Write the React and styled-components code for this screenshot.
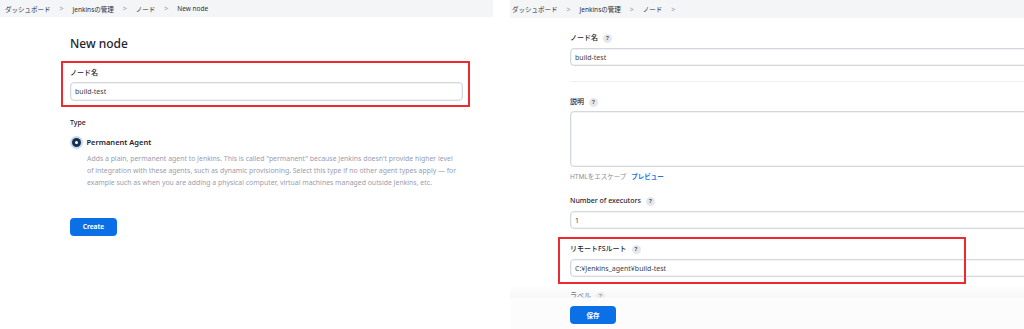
import React from 'react'
import styled, { createGlobalStyle } from 'styled-components'

const GlobalStyle = createGlobalStyle`
  html, body {
    margin: 0;
    padding: 0;
    background: #fff;
  }
  body {
    font-family: "Noto Sans", "Noto Sans CJK JP", sans-serif;
    color: #1f2330;
  }
`;

const Page = styled.div`
  display: flex;
  width: 1024px;
  height: 329px;
  overflow: hidden;
  gap: 17px;
`;

const Shot = styled.div`
  position: relative;
  display: flex;
  flex-direction: column;
  width: ${(p) => p.$width};
  flex-shrink: 0;
  height: 329px;
  overflow: hidden;
`;

const Breadcrumb = styled.div`
  display: flex;
  align-items: center;
  gap: 7px;
  height: ${(p) => p.$height}px;
  padding-left: ${(p) => p.$pad}px;
  background: #f4f5f7;
  font-size: 6.5px;
  color: #2b2f3a;
  flex-shrink: 0;
`;

const Crumb = styled.span`
  white-space: nowrap;
`;

const Chevron = styled.span`
  color: #9aa0aa;
  font-size: 7px;
  margin: 0 2px;
`;

const LeftMain = styled.div`
  display: flex;
  flex-direction: column;
  padding-left: 61px;
  width: 409px;
`;

const Heading = styled.h1`
  margin: 19px 0 0 9px;
  font-size: 12px;
  line-height: 16px;
  font-weight: 500;
  color: #1f2330;
`;

const Highlight = styled.div`
  margin-top: 9px;
  border: 2px solid #ec2a2f;
  padding: 5px 5px 4px 7px;
  display: flex;
  flex-direction: column;
  gap: 4px;
`;

const Label = styled.div`
  display: flex;
  align-items: center;
  gap: 5px;
  font-size: 7px;
  line-height: 10px;
  height: 10px;
  font-weight: 500;
  color: #1f2330;
  white-space: nowrap;
`;

const Help = styled.span`
  display: inline-flex;
  align-items: center;
  justify-content: center;
  width: 9px;
  height: 9px;
  border-radius: 50%;
  background: #e6e7eb;
  color: #4d525e;
  font-size: 6px;
  font-weight: 700;
`;

const Input = styled.div`
  box-sizing: border-box;
  height: ${(p) => p.$height || 18}px;
  width: ${(p) => p.$width || '100%'};
  border: 1px solid #d3d8df;
  box-shadow: inset 0 0 0 0.5px #e4e7ec;
  border-radius: 4px;
  padding: 0 4px;
  display: flex;
  align-items: ${(p) => (p.$area ? 'flex-start' : 'center')};
  font-size: 7px;
  color: #3a3f4b;
  background: #fff;
  white-space: nowrap;
`;

const Section = styled.div`
  display: flex;
  flex-direction: column;
  margin-left: 9px;
`;

const TypeTitle = styled.div`
  margin-top: 11px;
  font-size: 7px;
  line-height: 10px;
  font-weight: 500;
`;

const RadioRow = styled.div`
  margin-top: 8px;
  display: flex;
  align-items: center;
  height: 12px;
  gap: 6px;
  font-size: 7.5px;
  font-weight: 600;
  color: #1f2330;
`;

const Radio = styled.span`
  width: 9px;
  height: 9px;
  border-radius: 50%;
  background: #17304d;
  box-shadow: 0 0 0 2px #c7d9ef;
  display: flex;
  align-items: center;
  justify-content: center;
  margin-left: 1.5px;

  &::after {
    content: '';
    width: 3px;
    height: 3px;
    border-radius: 50%;
    background: #fff;
  }
`;

const Description = styled.p`
  margin: 5px 0 0 17px;
  font-size: 6.9px;
  line-height: 12px;
  color: #9a9db0;
  white-space: nowrap;
`;

const Button = styled.button`
  box-sizing: border-box;
  width: ${(p) => p.$width}px;
  height: 18px;
  border: none;
  border-radius: 4px;
  background: #0b6fe6;
  color: #fff;
  font-family: inherit;
  font-size: 6.5px;
  font-weight: 700;
  padding: 0;
`;

const CreateWrap = styled.div`
  margin-top: 23px;
`;

const RightMain = styled.div`
  display: flex;
  flex-direction: column;
  padding-left: 60px;
  width: 520px;
`;

const Field = styled.div`
  position: relative;
  display: flex;
  flex-direction: column;
  gap: ${(p) => p.$gap ?? 5}px;
  margin-top: ${(p) => p.$top}px;
`;

const Divider = styled.div`
  margin-top: 15px;
  height: 1px;
  background: #eef0f3;
`;

const Hint = styled.div`
  margin-top: 5px;
  font-size: 6.5px;
  line-height: 10px;
  color: #8a8e99;
  display: flex;
  gap: 5px;

  a {
    color: #1a73e8;
    font-weight: 700;
    text-decoration: none;
  }
`;

const Annotation = styled.div`
  position: absolute;
  left: -12px;
  top: -7px;
  width: 408px;
  height: 47px;
  box-sizing: border-box;
  border: 2px solid #ec2a2f;
  pointer-events: none;
`;

const Footer = styled.div`
  position: absolute;
  left: 0;
  right: 0;
  bottom: 0;
  height: 44px;
  background: linear-gradient(
    to bottom,
    rgba(255, 255, 255, 0) 0px,
    rgba(240, 240, 240, 0.55) 12px,
    #fcfcfc 13px
  );
  display: flex;
  align-items: flex-end;
  padding: 0 0 5px 60px;
  box-sizing: border-box;
`;

const crumbs = ['ダッシュボード', 'Jenkinsの管理', 'ノード'];

const App = () => {
  return (
    <>
      <GlobalStyle />
      <Page>
        <Shot $width="493px">
          <Breadcrumb $height={17} $pad={5}>
            {crumbs.map((c) => (
              <React.Fragment key={c}>
                <Crumb>{c}</Crumb>
                <Chevron>&gt;</Chevron>
              </React.Fragment>
            ))}
            <Crumb>New node</Crumb>
          </Breadcrumb>
          <LeftMain>
            <Heading>New node</Heading>
            <Highlight>
              <Label>ノード名</Label>
              <Input $height={19}>build-test</Input>
            </Highlight>
            <Section>
              <TypeTitle>Type</TypeTitle>
              <RadioRow>
                <Radio />
                Permanent Agent
              </RadioRow>
              <Description>
                Adds a plain, permanent agent to Jenkins. This is called "permanent" because Jenkins doesn't provide higher level<br />
                of integration with these agents, such as dynamic provisioning. Select this type if no other agent types apply — for<br />
                example such as when you are adding a physical computer, virtual machines managed outside Jenkins, etc.
              </Description>
              <CreateWrap>
                <Button $width={47}>Create</Button>
              </CreateWrap>
            </Section>
          </LeftMain>
        </Shot>

        <Shot $width="514px">
          <Breadcrumb $height={18} $pad={2}>
            {crumbs.map((c) => (
              <React.Fragment key={c}>
                <Crumb>{c}</Crumb>
                <Chevron>&gt;</Chevron>
              </React.Fragment>
            ))}
          </Breadcrumb>
          <RightMain>
            <Field $top={15}>
              <Label>ノード名<Help>?</Help></Label>
              <Input>build-test</Input>
            </Field>
            <Divider />
            <Field $top={15} $gap={4}>
              <Label>説明<Help>?</Help></Label>
              <Input $height={56} $area />
            </Field>
            <Hint>
              <span>HTMLをエスケープ</span>
              <a>プレビュー</a>
            </Hint>
            <Field $top={14}>
              <Label>Number of executors<Help>?</Help></Label>
              <Input>1</Input>
            </Field>
            <Field $top={15}>
              <Annotation />
              <Label>リモートFSルート<Help>?</Help></Label>
              <Input>C:¥Jenkins_agent¥build-test</Input>
            </Field>
            <Field $top={14}>
              <Label>ラベル<Help>?</Help></Label>
              <Input />
            </Field>
          </RightMain>
          <Footer>
            <Button $width={46}>保存</Button>
          </Footer>
        </Shot>
      </Page>
    </>
  )
}

export default App;
